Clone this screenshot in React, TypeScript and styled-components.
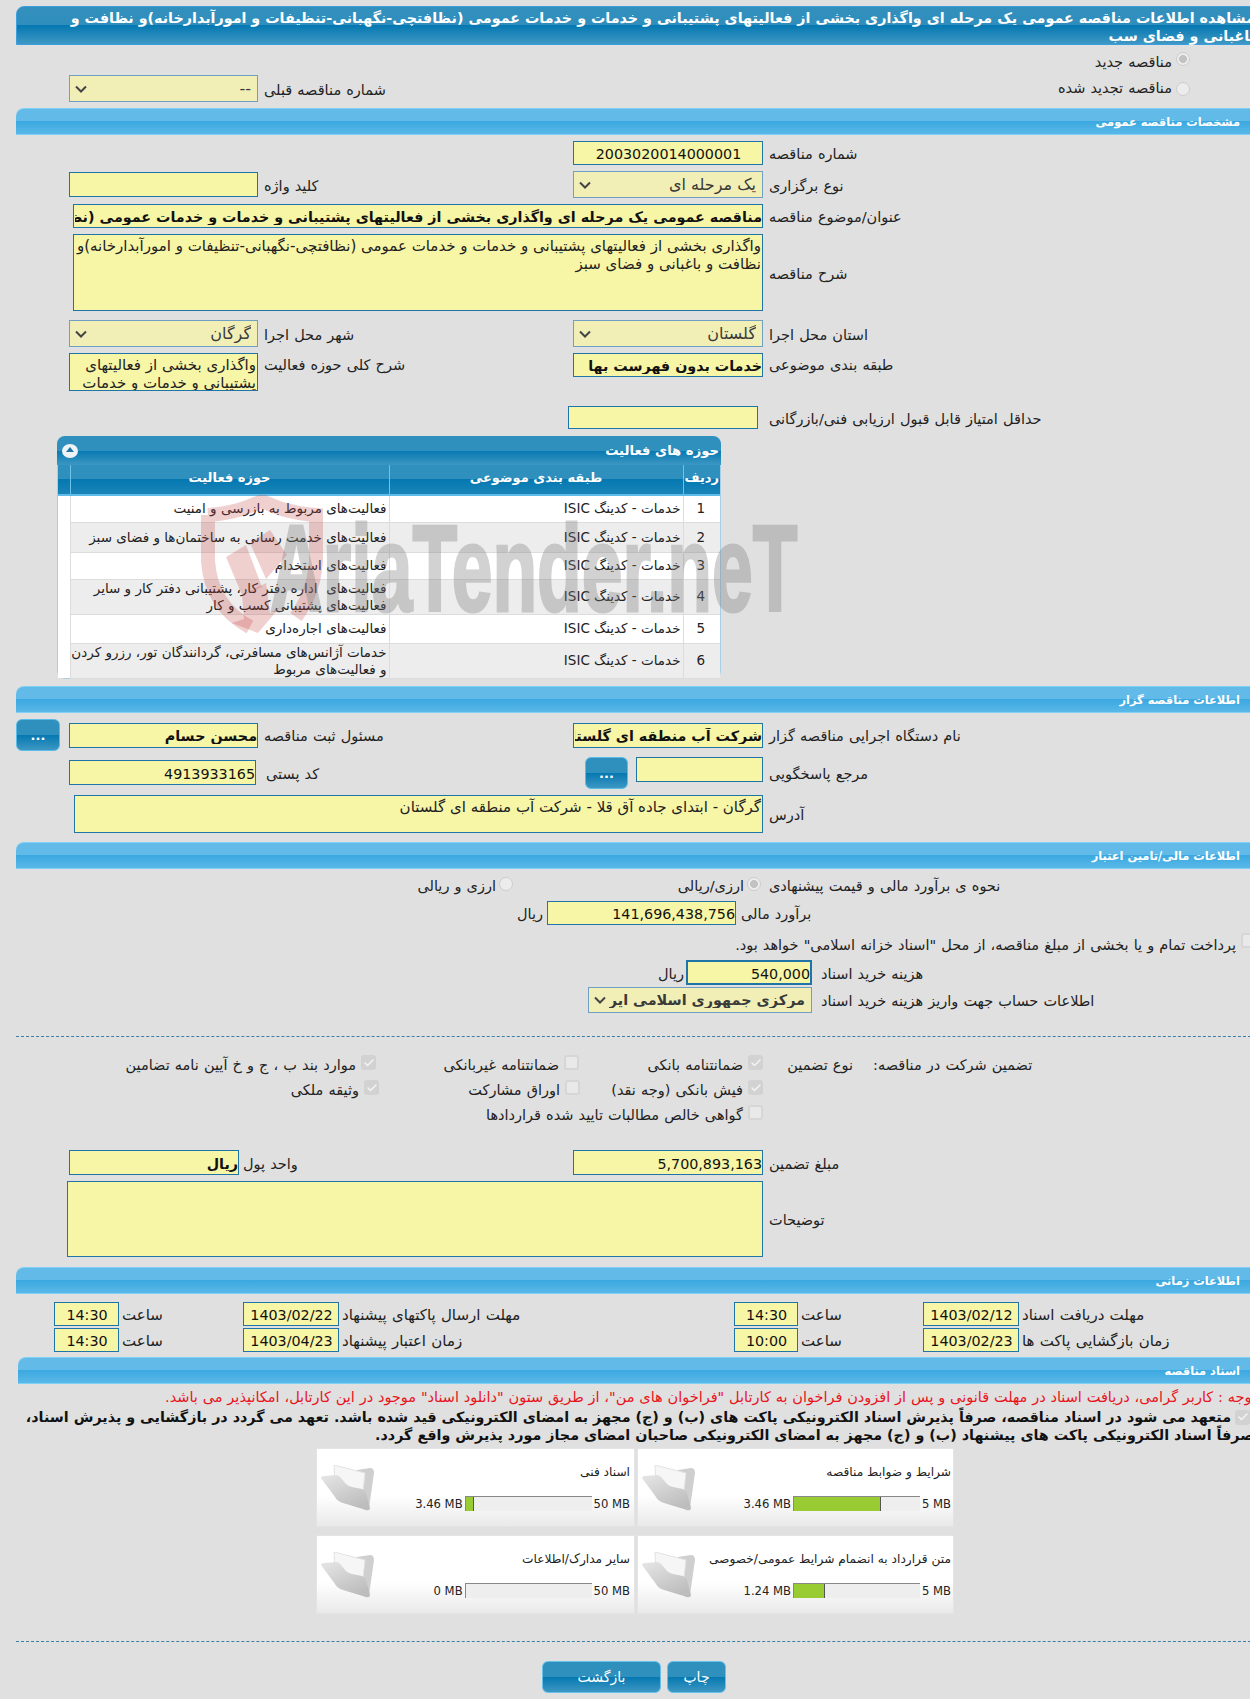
import styled, { createGlobalStyle } from "styled-components"
import { Check } from "lucide-react"

const Global = createGlobalStyle`
  html, body {
    margin: 0;
    padding: 0;
    width: 1250px;
    height: 1699px;
    overflow: hidden;
    background: #e0e0e0;
  }
  body {
    font-family: "DejaVu Sans", sans-serif;
    font-size: 13px;
    color: #222;
  }
`

const Page = styled.div`
  position: relative;
  width: 1240px;
  margin-left: 16px;
  padding-top: 6px;
`

const TitleBar = styled.div`
  box-sizing: border-box;
  height: 39px;
  padding: 2px 0 0;
  direction: rtl;
  color: #fff;
  font-weight: bold;
  font-size: 14.3px;
  line-height: 18px;
  white-space: nowrap;
  border: 1px solid #3a9fdc;
  border-top-left-radius: 8px;
  background: linear-gradient(#3390bd 0, #2f8ebd 50%, #0578b1 50%, #3f98c4 100%);
`

const SectionBar = styled.div<{ $mt: number; $ml?: number }>`
  box-sizing: border-box;
  height: 27px;
  margin-top: ${(p) => p.$mt}px;
  margin-left: ${(p) => p.$ml ?? 0}px;
  padding: 6px 16px 0 0;
  direction: rtl;
  color: #fff;
  font-weight: bold;
  font-size: 11.4px;
  line-height: 15px;
  border-top: 1px solid #7fd0f5;
  border-bottom: 1px solid #7fd0f5;
  border-top-left-radius: 8px;
  background: linear-gradient(#62bae8 0, #62bae8 48%, #3aa8e0 48%, #5ab8e8 100%);
`

const Line = styled.div<{ $mt: number; $h: number; $top?: boolean; $pl?: number; $end?: boolean; $pr?: number }>`
  display: flex;
  height: ${(p) => p.$h}px;
  margin-top: ${(p) => p.$mt}px;
  padding-left: ${(p) => p.$pl ?? 0}px;
  padding-right: ${(p) => p.$pr ?? 0}px;
  box-sizing: border-box;
  align-items: ${(p) => (p.$top ? "flex-start" : "center")};
  justify-content: ${(p) => (p.$end ? "flex-end" : "flex-start")};
`

const LeftHalf = styled.div<{ $pl?: number; $top?: boolean }>`
  display: flex;
  box-sizing: border-box;
  width: 557px;
  padding-left: ${(p) => p.$pl ?? 53}px;
  align-items: ${(p) => (p.$top ? "flex-start" : "center")};
`

const RightHalf = styled.div<{ $ml?: number; $top?: boolean; $far?: boolean }>`
  display: flex;
  margin-left: ${(p) => p.$ml ?? 0}px;
  align-items: ${(p) => (p.$top ? "flex-start" : "center")};
  ${(p) => (p.$far ? "flex: 1; justify-content: flex-end; padding-right: 66px;" : "")}
`

const Caption = styled.span.attrs({ dir: "rtl" })<{
  $ml?: number
  $w?: number
  $mt?: number
  $align?: string
  $size?: number
}>`
  display: inline-block;
  box-sizing: border-box;
  margin-left: ${(p) => p.$ml ?? 6}px;
  margin-top: ${(p) => p.$mt ?? 0}px;
  padding-top: 2px;
  ${(p) => (p.$w ? `width: ${p.$w}px; flex: none;` : "")}
  text-align: ${(p) => p.$align ?? "left"};
  font-size: ${(p) => p.$size ?? 14.5}px;
  word-spacing: 0.5px;
  line-height: 20px;
  white-space: nowrap;
  color: #222;
`

const Entry = styled.input.attrs({ readOnly: true, dir: "rtl" })<{
  $w: number
  $h?: number
  $bold?: boolean
  $center?: boolean
  $ml?: number
  $mt?: number
  $thick?: boolean
}>`
  box-sizing: border-box;
  flex: none;
  width: ${(p) => p.$w}px;
  height: ${(p) => p.$h ?? 25}px;
  margin: ${(p) => p.$mt ?? 0}px 0 0 ${(p) => p.$ml ?? 0}px;
  padding: 2px 0 0 1px;
  border: ${(p) => (p.$thick ? 2 : 1)}px solid #1f74a8;
  border-radius: 0;
  outline: none;
  background: #f7f5a6;
  color: #111;
  font-family: "DejaVu Sans", sans-serif;
  font-size: 14.3px;
  font-weight: ${(p) => (p.$bold ? "bold" : "normal")};
  text-align: ${(p) => (p.$center ? "center" : "right")};
`

const chevron =
  "data:image/svg+xml,%3Csvg xmlns='http://www.w3.org/2000/svg' width='12' height='8' viewBox='0 0 12 8'%3E%3Cpath d='M1 1.5 L6 6.5 L11 1.5' fill='none' stroke='%23444' stroke-width='2'/%3E%3C/svg%3E"

const Pick = styled.select.attrs({ disabled: true, dir: "rtl" })<{ $w: number; $h?: number; $bold?: boolean }>`
  box-sizing: border-box;
  flex: none;
  width: ${(p) => p.$w}px;
  height: ${(p) => p.$h ?? 27}px;
  margin: 0;
  padding: 0 6px 0 20px;
  appearance: none;
  border: 1px solid #6f9fc2;
  border-radius: 0;
  background: #f1efb6 url("${chevron}") no-repeat 5px center;
  color: #3a3a3a;
  opacity: 1;
  font-family: "DejaVu Sans", sans-serif;
  font-size: ${(p) => (p.$bold ? 14.4 : 16)}px;
  font-weight: ${(p) => (p.$bold ? "bold" : "normal")};
`

const Note = styled.textarea.attrs({ readOnly: true, dir: "rtl" })<{ $w: number; $h: number; $ml?: number }>`
  box-sizing: border-box;
  flex: none;
  width: ${(p) => p.$w}px;
  height: ${(p) => p.$h}px;
  margin: 0 0 0 ${(p) => p.$ml ?? 0}px;
  padding: 2px 1px 0;
  border: 1px solid #1f74a8;
  border-radius: 0;
  outline: none;
  resize: none;
  overflow: hidden;
  background: #f7f5a6;
  color: #222;
  font-family: "DejaVu Sans", sans-serif;
  font-size: 15px;
  line-height: 18px;
`

const Dots = styled.button<{ $w: number; $ml?: number }>`
  box-sizing: border-box;
  flex: none;
  width: ${(p) => p.$w}px;
  height: 32px;
  margin-left: ${(p) => p.$ml ?? 0}px;
  padding: 0;
  border: 1px solid #58bbe8;
  border-radius: 6px;
  color: #fff;
  font-family: "DejaVu Sans", sans-serif;
  font-size: 13px;
  font-weight: bold;
  background: linear-gradient(#2f90be 0, #2f90be 50%, #0578b1 50%, #3d97c2 100%);
`

const Radio = styled.span<{ $on?: boolean; $ml?: number }>`
  display: inline-block;
  flex: none;
  box-sizing: border-box;
  width: 14px;
  height: 14px;
  margin-left: ${(p) => p.$ml ?? 0}px;
  border: 1px solid #cdcdcd;
  border-radius: 50%;
  background: ${(p) => (p.$on ? "radial-gradient(circle, #c2c2c2 0, #c2c2c2 44%, #ececec 48%)" : "#ececec")};
`

const Tick = styled.span<{ $on?: boolean; $nudge?: number }>`
  display: inline-flex;
  flex: none;
  box-sizing: border-box;
  width: 15px;
  height: 15px;
  margin-left: 5px;
  margin-right: ${(p) => -(p.$nudge ?? 0)}px;
  align-items: center;
  justify-content: center;
  border-radius: 3px;
  border: ${(p) => (p.$on ? "none" : "2px solid #d6d6d6")};
  background: ${(p) => (p.$on ? "#d2d2d2" : "#e9e9e9")};
  color: #f4f4f4;
`

const Panel = styled.div`
  position: relative;
  box-sizing: border-box;
  width: 664px;
  height: 243px;
  margin: 7px 0 0 41px;
  border: 1px solid #a6cfe6;
  border-radius: 8px;
  background: #fff;
`

const PanelHead = styled.div`
  display: flex;
  box-sizing: border-box;
  height: 29px;
  margin: -1px -1px 0;
  padding: 0 2px 0 5px;
  align-items: center;
  justify-content: space-between;
  border-top-left-radius: 8px;
  border-top-right-radius: 8px;
  color: #fff;
  font-weight: bold;
  font-size: 13.2px;
  background: linear-gradient(#2f90be 0, #2f90be 50%, #0578b1 50%, #3d97c2 100%);
`

const Toggle = styled.span`
  display: block;
  width: 16px;
  height: 14px;
  border-radius: 50%;
  background: #eef3f6;
  position: relative;
  &::after {
    content: "";
    position: absolute;
    left: 4px;
    top: 3px;
    border-left: 4px solid transparent;
    border-right: 4px solid transparent;
    border-bottom: 5px solid #1f74a8;
  }
`

const Table = styled.table`
  width: 662px;
  margin-top: 0;
  table-layout: fixed;
  border-collapse: collapse;
  direction: ltr;
`

const Column = styled.col<{ $w: number }>`
  width: ${(p) => p.$w}px;
`

const HeadCell = styled.th`
  box-sizing: border-box;
  height: 30px;
  padding: 0 0 4px;
  border-left: 1px solid #6cc3ea;
  border-bottom: 2px solid #5fbce8;
  color: #fff;
  font-size: 13px;
  font-weight: bold;
  background: linear-gradient(#2f90be 0, #2f90be 50%, #0578b1 50%, #1a84b8 100%);
  &:first-child {
    border-left: none;
  }
`

const Row = styled.tr<{ $h: number; $odd: boolean }>`
  height: ${(p) => p.$h}px;
  background: ${(p) => (p.$odd ? "#fff" : "#eeeded")};
`

const Cell = styled.td<{ $center?: boolean }>`
  padding: 0 2px 0 0;
  direction: rtl;
  text-align: ${(p) => (p.$center ? "center" : "right")};
  font-size: 13.5px;
  line-height: 17px;
  white-space: pre;
  color: #222;
  border-left: 1px solid #dcdcdc;
  border-bottom: 1px solid #dcdcdc;
  &:first-child {
    background: #fff;
    border-left: none;
    border-bottom: none;
  }
`

const Watermark = styled.div`
  position: absolute;
  left: 142px;
  top: 58px;
  width: 620px;
  height: 150px;
  pointer-events: none;
`

const WaterShield = styled.svg`
  position: absolute;
  left: 0;
  top: 0;
`

const WaterText = styled.div`
  position: absolute;
  left: 70px;
  top: 7px;
  font-family: "Liberation Sans", sans-serif;
  font-weight: bold;
  font-size: 122px;
  line-height: 134px;
  white-space: nowrap;
  color: #7d7d7d;
  -webkit-text-stroke: 3px #7d7d7d;
  opacity: 0.34;
  transform: scaleX(0.6);
  transform-origin: left top;
`

const Divider = styled.div<{ $mt: number }>`
  margin-top: ${(p) => p.$mt}px;
  border-top: 1px dashed #3b80a8;
`

const GuaranteeGrid = styled.div`
  display: grid;
  grid-template-columns: 360px 203px 184px 90px auto;
  grid-auto-rows: 15px;
  row-gap: 10px;
  margin-top: 18px;
`

const Opt = styled.div<{ $lead?: boolean }>`
  display: flex;
  justify-content: ${(p) => (p.$lead ? "flex-start" : "flex-end")};
  padding-left: ${(p) => (p.$lead ? 20 : 0)}px;
  align-items: flex-start;
`

const OptText = styled.span.attrs({ dir: "rtl" })`
  font-size: 14.5px;
  word-spacing: 0.5px;
  line-height: 20px;
  margin-top: 0;
  white-space: nowrap;
`

const RedNote = styled.div`
  box-sizing: border-box;
  height: 18px;
  margin-top: 4px;
  width: 1240px;
  direction: rtl;
  color: #e8141c;
  font-size: 14.5px;
  word-spacing: 0.2px;
  line-height: 18px;
  white-space: nowrap;
`

const Pledge = styled.div`
  box-sizing: border-box;
  width: 1238px;
  height: 38px;
  margin-top: 2px;
  direction: rtl;
  color: #111;
  font-size: 14.3px;
  font-weight: bold;
  line-height: 18px;
  white-space: nowrap;
  ${Tick} {
    margin: 0 4px 0 4px;
    vertical-align: -1px;
  }
`

const CardGrid = styled.div`
  display: grid;
  grid-template-columns: 319px 317px;
  grid-auto-rows: 79px;
  column-gap: 2px;
  row-gap: 8px;
  margin: 2px 0 0 300px;
  width: 638px;
`

const Card = styled.div<{ $inset: number }>`
  display: flex;
  box-sizing: border-box;
  padding: 16px ${(p) => p.$inset}px 0 4px;
  border: 1px solid #e4e4e4;
  background: linear-gradient(#fff 0, #fff 60%, #e9e9e9 100%);
`

const CardBody = styled.div`
  flex: 1;
  display: flex;
  flex-direction: column;
  align-items: flex-end;
  min-width: 0;
`

const CardName = styled.div.attrs({ dir: "rtl" })`
  height: 14px;
  font-size: 12.2px;
  line-height: 14px;
  white-space: nowrap;
`

const Meter = styled.div`
  display: flex;
  align-items: center;
  gap: 2px;
  margin-top: 17px;
  height: 15px;
  font-size: 11.6px;
  white-space: nowrap;
`

const Track = styled.div`
  box-sizing: border-box;
  width: 127px;
  height: 15px;
  border-top: 1px solid #888;
  border-left: 1px solid #888;
  background: #eee;
`

const Fill = styled.div`
  box-sizing: border-box;
  height: 14px;
  border-right: 1px solid #555;
  background: #99cc33;
`

const FolderIcon = styled.svg`
  flex: none;
  width: 53px;
  height: 46px;
`

const Actions = styled.div`
  display: flex;
  gap: 6px;
  margin: 19px 0 0 526px;
`

const ActionButton = styled.button<{ $w: number }>`
  box-sizing: border-box;
  width: ${(p) => p.$w}px;
  height: 32px;
  padding: 0;
  border: 1px solid #66c1ea;
  border-radius: 6px;
  color: #fff;
  font-family: "DejaVu Sans", sans-serif;
  font-size: 14px;
  background: linear-gradient(#2f90be 0, #2f90be 50%, #0578b1 50%, #3d97c2 100%);
`

const rows = [
  { h: 27, cat: "خدمات - کدینگ ISIC", act: "فعالیت‌های مربوط به بازرسی و امنیت" },
  { h: 30, cat: "خدمات - کدینگ ISIC", act: "فعالیت‌های خدمت رسانی به ساختمان‌ها و فضای سبز" },
  { h: 27, cat: "خدمات - کدینگ ISIC", act: "فعالیت‌های استخدام" },
  { h: 35, cat: "خدمات - کدینگ ISIC", act: "فعالیت‌های  اداره دفتر کار، پشتیبانی دفتر کار و سایر\nفعالیت‌های پشتیبانی کسب و کار" },
  { h: 29, cat: "خدمات - کدینگ ISIC", act: "فعالیت‌های اجاره‌داری" },
  { h: 34, cat: "خدمات - کدینگ ISIC", act: "خدمات آژانس‌های مسافرتی، گردانندگان تور، رزرو کردن\nو فعالیت‌های مربوط" },
]

const docs = [
  { name: "اسناد فنی", used: "3.46 MB", max: "50 MB", pct: 6.9, inset: 4 },
  { name: "شرایط و ضوابط مناقصه", used: "3.46 MB", max: "5 MB", pct: 69.2, inset: 2 },
  { name: "سایر مدارک/اطلاعات", used: "0 MB", max: "50 MB", pct: 0, inset: 4 },
  { name: "متن قرارداد به انضمام شرایط عمومی/خصوصی", used: "1.24 MB", max: "5 MB", pct: 24.8, inset: 2 },
]

function Folder() {
  return (
    <FolderIcon viewBox="0 0 53 46">
      <defs>
        <linearGradient id="fold" x1="0" y1="0" x2="0.6" y2="1">
          <stop offset="0" stopColor="#e6e6e6" />
          <stop offset="1" stopColor="#bdbdbd" />
        </linearGradient>
      </defs>
      <path d="M36 5 L49 3 Q53 3 53 8 L48 43 Q47 46 44 45 L30 30 Z" fill="#cfcfcf" />
      <path d="M13 0 L44 8 L42 26 L14 20 Z" fill="#f6f6f6" stroke="#e2e2e2" />
      <path d="M0 13 Q0 11 3 11 L15 10 Q18 10 20 13 L25 19 Q27 21 31 22 L41 24 Q44 25 45 28 L49 43 Q49 46 45 45 L22 38 Q16 36 14 32 Z" fill="url(#fold)" />
    </FolderIcon>
  )
}

function DocCard({ name, used, max, pct, inset }: { name: string; used: string; max: string; pct: number; inset: number }) {
  return (
    <Card $inset={inset}>
      <Folder />
      <CardBody>
        <CardName>{name}</CardName>
        <Meter>
          <span>{used}</span>
          <Track>{pct > 0 && <Fill style={{ width: `${pct}%` }} />}</Track>
          <span>{max}</span>
        </Meter>
      </CardBody>
    </Card>
  )
}

function Option({ label, on, nudge }: { label: string; on?: boolean; nudge?: number }) {
  return (
    <Opt>
      <OptText>{label}</OptText>
      <Tick $on={on} $nudge={nudge}>
        {on && <Check size={12} strokeWidth={3} />}
      </Tick>
    </Opt>
  )
}

export default function App() {
  return (
    <>
      <Global />
      <Page>
        <TitleBar>
          مشاهده اطلاعات مناقصه عمومی یک مرحله ای واگذاری بخشی از فعالیتهای پشتیبانی و خدمات و خدمات عمومی (نظافتچی-نگهبانی-تنظیفات و امورآبدارخانه)و نظافت و
          <br />
          باغبانی و فضای سب
        </TitleBar>

        <Line $mt={7} $h={14} $top $end $pr={66}>
          <Caption $ml={0} $mt={-2}>مناقصه جدید</Caption>
          <Radio $on $ml={4} />
        </Line>
        <Line $mt={9} $h={27}>
          <LeftHalf>
            <Pick $w={189}><option>--</option></Pick>
            <Caption>شماره مناقصه قبلی</Caption>
          </LeftHalf>
          <RightHalf $far>
            <Caption $ml={0} $mt={-4}>مناقصه تجدید شده</Caption>
            <Radio $ml={4} />
          </RightHalf>
        </Line>

        <SectionBar $mt={6}>مشخصات مناقصه عمومی</SectionBar>

        <Line $mt={6} $h={24}>
          <LeftHalf />
          <RightHalf>
            <Entry $w={190} $h={24} $center value="2003020014000001" />
            <Caption>شماره مناقصه</Caption>
          </RightHalf>
        </Line>
        <Line $mt={6} $h={27}>
          <LeftHalf>
            <Entry $w={189} value="" />
            <Caption>کلید واژه</Caption>
          </LeftHalf>
          <RightHalf>
            <Pick $w={190}><option>یک مرحله ای</option></Pick>
            <Caption>نوع برگزاری</Caption>
          </RightHalf>
        </Line>
        <Line $mt={6} $h={24} $pl={57}>
          <Entry $w={690} $h={24} $bold value="مناقصه عمومی یک مرحله ای واگذاری بخشی از فعالیتهای پشتیبانی و خدمات و خدمات عمومی (نظافتچی-نگهبانی-تنظیفات و امورآبدارخانه)و نظافت و باغبانی و فضای سبز" />
          <Caption>عنوان/موضوع مناقصه</Caption>
        </Line>
        <Line $mt={6} $h={77} $pl={57}>
          <Note $w={690} $h={77} value="واگذاری بخشی از فعالیتهای پشتیبانی و خدمات و خدمات عمومی (نظافتچی-نگهبانی-تنظیفات و امورآبدارخانه)و نظافت و باغبانی و فضای سبز" />
          <Caption>شرح مناقصه</Caption>
        </Line>
        <Line $mt={9} $h={27}>
          <LeftHalf>
            <Pick $w={189}><option>گرگان</option></Pick>
            <Caption>شهر محل اجرا</Caption>
          </LeftHalf>
          <RightHalf>
            <Pick $w={190}><option>گلستان</option></Pick>
            <Caption>استان محل اجرا</Caption>
          </RightHalf>
        </Line>
        <Line $mt={6} $h={38} $top>
          <LeftHalf $top>
            <Note $w={189} $h={38} value="واگذاری بخشی از فعالیتهای پشتیبانی و خدمات و خدمات عمومی" />
            <Caption>شرح کلی حوزه فعالیت</Caption>
          </LeftHalf>
          <RightHalf $top>
            <Entry $w={190} $h={24} $bold value="خدمات بدون فهرست بها" />
            <Caption>طبقه بندی موضوعی</Caption>
          </RightHalf>
        </Line>
        <Line $mt={15} $h={23}>
          <LeftHalf />
          <RightHalf $ml={-5}>
            <Entry $w={190} $h={23} value="" />
            <Caption $ml={11}>حداقل امتیاز قابل قبول ارزیابی فنی/بازرگانی</Caption>
          </RightHalf>
        </Line>

        <Panel>
          <PanelHead>
            <Toggle />
            <span dir="rtl">حوزه های فعالیت</span>
          </PanelHead>
          <Table>
            <colgroup>
              <Column $w={12} />
              <Column $w={319} />
              <Column $w={294} />
              <Column $w={37} />
            </colgroup>
            <thead>
              <tr>
                <HeadCell />
                <HeadCell dir="rtl">حوزه فعالیت</HeadCell>
                <HeadCell dir="rtl">طبقه بندی موضوعی</HeadCell>
                <HeadCell dir="rtl">ردیف</HeadCell>
              </tr>
            </thead>
            <tbody>
              {rows.map((r, i) => (
                <Row key={i} $h={r.h} $odd={i % 2 === 0}>
                  <Cell />
                  <Cell>{r.act}</Cell>
                  <Cell>{r.cat}</Cell>
                  <Cell $center>{i + 1}</Cell>
                </Row>
              ))}
            </tbody>
          </Table>
          <Watermark>
            <WaterShield width="130" height="145" viewBox="0 0 130 145">
              <path d="M8 20 C36 18 48 12 62 6 C76 12 88 18 116 20 L116 66 C114 92 106 108 96 122 M8 20 L8 66 C10 96 24 118 50 132" fill="none" stroke="rgba(196,70,70,0.26)" strokeWidth="14" />
              <path d="M26 62 L46 50 L62 92 L42 100 Z M50 48 L70 35 L87 60 L66 84 Z" fill="rgba(196,70,70,0.26)" />
              <path d="M42 100 L66 88 L70 118 L80 112 L58 138 L32 128 L44 124 Z" fill="rgba(196,70,70,0.26)" />
            </WaterShield>
            <WaterText>AriaTender.neT</WaterText>
          </Watermark>
        </Panel>

        <SectionBar $mt={7}>اطلاعات مناقصه گزار</SectionBar>

        <Line $mt={6} $h={32}>
          <LeftHalf $pl={0}>
            <Dots $w={44}>...</Dots>
            <Entry $w={189} $ml={9} $bold value="محسن حسام" />
            <Caption>مسئول ثبت مناقصه</Caption>
          </LeftHalf>
          <RightHalf>
            <Entry $w={190} $bold value="شرکت آب منطقه ای گلستان" />
            <Caption>نام دستگاه اجرایی مناقصه گزار</Caption>
          </RightHalf>
        </Line>
        <Line $mt={6} $h={32} $top>
          <LeftHalf $top>
            <Entry $w={187} $mt={3} value="4913933165" />
            <Caption $ml={10} $mt={5}>کد پستی</Caption>
          </LeftHalf>
          <RightHalf $ml={12} $top>
            <Dots $w={43}>...</Dots>
            <Entry $w={127} $ml={8} value="" />
            <Caption $mt={5}>مرجع پاسخگویی</Caption>
          </RightHalf>
        </Line>
        <Line $mt={6} $h={38} $pl={58}>
          <Note $w={689} $h={38} value="گرگان - ابتدای جاده آق قلا - شرکت آب منطقه ای گلستان" />
          <Caption>آدرس</Caption>
        </Line>

        <SectionBar $mt={9}>اطلاعات مالی/تامین اعتبار</SectionBar>

        <Line $mt={8} $h={15} $top $pl={400}>
          <Caption $w={80} $ml={0} $mt={-3} $align="right">ارزی و ریالی</Caption>
          <Radio $ml={3} />
          <Caption $w={231} $ml={0} $mt={-3} $align="right">ارزی/ریالی</Caption>
          <Radio $on $ml={3} />
          <Caption $ml={8} $mt={-3}>نحوه ی برآورد مالی و قیمت پیشنهادی</Caption>
        </Line>
        <Line $mt={9} $h={24} $pl={490}>
          <Caption $w={37} $ml={0} $align="right">ریال</Caption>
          <Entry $w={189} $h={24} $ml={4} value="141,696,438,756" />
          <Caption $ml={5}>برآورد مالی</Caption>
        </Line>
        <Line $mt={8} $h={14} $top $end>
          <Caption $ml={0}>پرداخت تمام و یا بخشی از مبلغ مناقصه، از محل "اسناد خزانه اسلامی" خواهد بود.</Caption>
          <Tick />
        </Line>
        <Line $mt={13} $h={25} $pl={606}>
          <Caption $w={62} $ml={0} $align="right">ریال</Caption>
          <Entry $w={126} $h={25} $ml={2} $thick value="540,000" />
          <Caption $ml={9}>هزینه خرید اسناد</Caption>
        </Line>
        <Line $mt={2} $h={26} $pl={572}>
          <Pick $w={224} $h={26} $bold><option>مرکزی جمهوری اسلامی ایران</option></Pick>
          <Caption $ml={9}>اطلاعات حساب جهت واریز هزینه خرید اسناد</Caption>
        </Line>

        <Divider $mt={23} />

        <GuaranteeGrid>
          <Option label="موارد بند ب ، ج و خ آیین نامه تضامین" on />
          <Option label="ضمانتنامه غیربانکی" />
          <Option label="ضمانتنامه بانکی" on />
          <Opt><OptText>نوع تضمین</OptText></Opt>
          <Opt $lead><OptText>تضمین شرکت در مناقصه:</OptText></Opt>
          <Option label="وثیقه ملکی" on nudge={3} />
          <Option label="اوراق مشارکت" nudge={1} />
          <Option label="فیش بانکی (وجه نقد)" on />
          <span />
          <span />
          <span />
          <span />
          <Option label="گواهی خالص مطالبات تایید شده قراردادها" />
        </GuaranteeGrid>

        <Line $mt={30} $h={25}>
          <LeftHalf>
            <Entry $w={170} $bold value="ریال" />
            <Caption $ml={4}>واحد پول</Caption>
          </LeftHalf>
          <RightHalf>
            <Entry $w={190} value="5,700,893,163" />
            <Caption>مبلغ تضمین</Caption>
          </RightHalf>
        </Line>
        <Line $mt={6} $h={76} $pl={51}>
          <Note $w={696} $h={76} value="" />
          <Caption>توضیحات</Caption>
        </Line>

        <SectionBar $mt={10}>اطلاعات زمانی</SectionBar>

        <Line $mt={8} $h={24} $pl={38}>
          <Entry $w={65} $h={24} $center value="14:30" />
          <Caption $w={121} $ml={3} $size={15}>ساعت</Caption>
          <Entry $w={96} $h={24} $center value="1403/02/22" />
          <Caption $w={392} $ml={3} $size={15}>مهلت ارسال پاکتهای پیشنهاد</Caption>
          <Entry $w={64} $h={24} $center value="14:30" />
          <Caption $w={122} $ml={3} $size={15}>ساعت</Caption>
          <Entry $w={96} $h={24} $center value="1403/02/12" />
          <Caption $ml={3} $size={15}>مهلت دریافت اسناد</Caption>
        </Line>
        <Line $mt={2} $h={24} $pl={38}>
          <Entry $w={65} $h={24} $center value="14:30" />
          <Caption $w={121} $ml={3} $size={15}>ساعت</Caption>
          <Entry $w={96} $h={24} $center value="1403/04/23" />
          <Caption $w={392} $ml={3} $size={15}>زمان اعتبار پیشنهاد</Caption>
          <Entry $w={64} $h={24} $center value="10:00" />
          <Caption $w={122} $ml={3} $size={15}>ساعت</Caption>
          <Entry $w={96} $h={24} $center value="1403/02/23" />
          <Caption $ml={3} $size={15}>زمان بازگشایی پاکت ها</Caption>
        </Line>

        <SectionBar $mt={5} $ml={2}>اسناد مناقصه</SectionBar>

        <RedNote>توجه : کاربر گرامی، دریافت اسناد در مهلت قانونی و پس از افزودن فراخوان به کارتابل "فراخوان های من"، از طریق ستون "دانلود اسناد" موجود در این کارتابل، امکانپذیر می باشد.</RedNote>
        <Pledge>
          <Tick $on><Check size={12} strokeWidth={3} /></Tick>
          متعهد می شود در اسناد مناقصه، صرفاً پذیرش اسناد الکترونیکی پاکت های (ب) و (ج) مجهز به امضای الکترونیکی قید شده باشد. تعهد می گردد در بازگشایی و پذیرش اسناد،
          <br />
          صرفاً اسناد الکترونیکی پاکت های پیشنهاد (ب) و (ج) مجهز به امضای الکترونیکی صاحبان امضای مجاز مورد پذیرش واقع گردد.
        </Pledge>

        <CardGrid>
          {docs.map((d) => (
            <DocCard key={d.name} {...d} />
          ))}
        </CardGrid>

        <Divider $mt={27} />

        <Actions>
          <ActionButton $w={119}>بازگشت</ActionButton>
          <ActionButton $w={59}>چاپ</ActionButton>
        </Actions>
      </Page>
    </>
  )
}
